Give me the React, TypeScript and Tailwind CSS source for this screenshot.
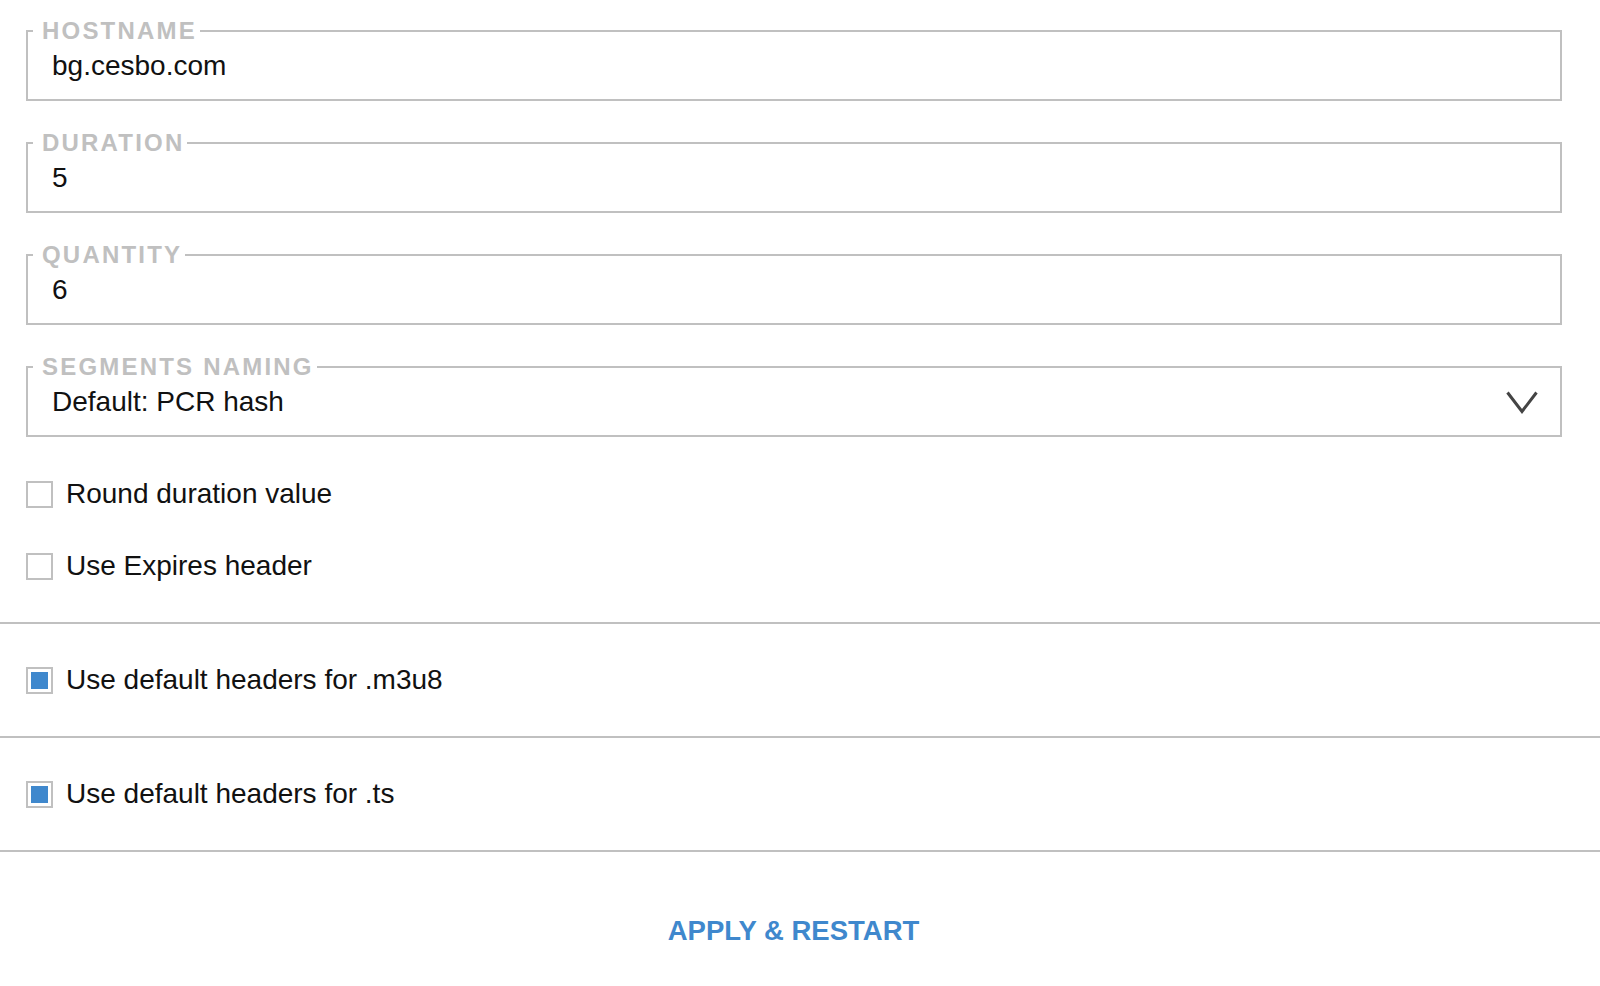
import { useState } from "react";

const font = { fontFamily: '"Liberation Sans", Arial, sans-serif' };

function Field({ label, value, select }: { label: string; value: string; select?: boolean }) {
  return (
    <fieldset className="border-2 border-[#c0c0c0] px-0 mt-[30px] first:mt-0">
      <legend className="ml-[5px] pl-[9px] pr-[3px] text-[24px] leading-[23px] font-bold tracking-[2.2px] text-[#c0c0c0]">
        {label}
      </legend>
      <div className="flex items-center justify-between pl-[24px] pr-[22px] pt-[10px] pb-[19px]">
        <span className="text-[28px] leading-[28px] text-[#111]">{value}</span>
        {select && (
          <svg width="32" height="23" viewBox="0 0 32 23" fill="none">
            <polyline points="1.5,1.5 16,20.5 30.5,1.5" stroke="#444" strokeWidth="3" />
          </svg>
        )}
      </div>
    </fieldset>
  );
}

function Check({ label, checked, onToggle }: { label: string; checked: boolean; onToggle: () => void }) {
  return (
    <label className="flex items-center gap-[13px] cursor-pointer" onClick={onToggle}>
      <span className="w-[27px] h-[27px] border-2 border-[#c0c0c0] p-[3px] bg-white">
        {checked && <span className="block w-full h-full bg-[#3f88cd]" />}
      </span>
      <span className="text-[28px] leading-[28px] text-[#111]">{label}</span>
    </label>
  );
}

export default function App() {
  const [round, setRound] = useState(false);
  const [expires, setExpires] = useState(false);
  const [m3u8, setM3u8] = useState(true);
  const [ts, setTs] = useState(true);

  return (
    <div className="min-h-screen bg-white" style={font}>
      <div className="pl-[26px] pr-[38px] pt-[19px]">
        <Field label="HOSTNAME" value="bg.cesbo.com" />
        <Field label="DURATION" value="5" />
        <Field label="QUANTITY" value="6" />
        <Field label="SEGMENTS NAMING" value="Default: PCR hash" select />

        <div className="pt-[21px] pb-[20px]">
          <div className="h-[72px] flex items-center">
            <Check label="Round duration value" checked={round} onToggle={() => setRound(!round)} />
          </div>
          <div className="h-[72px] flex items-center">
            <Check label="Use Expires header" checked={expires} onToggle={() => setExpires(!expires)} />
          </div>
        </div>
      </div>

      <div className="border-t-2 border-[#c0c0c0]">
        <div className="h-[114px] flex items-center pl-[26px] border-b-2 border-[#c0c0c0]">
          <Check label="Use default headers for .m3u8" checked={m3u8} onToggle={() => setM3u8(!m3u8)} />
        </div>
        <div className="h-[114px] flex items-center pl-[26px] border-b-2 border-[#c0c0c0]">
          <Check label="Use default headers for .ts" checked={ts} onToggle={() => setTs(!ts)} />
        </div>
      </div>

      <div className="pt-[65px] pr-[13px] text-center">
        <button className="text-[27.5px] leading-[27px] font-bold text-[#3f88cd]">APPLY &amp; RESTART</button>
      </div>
    </div>
  );
}
